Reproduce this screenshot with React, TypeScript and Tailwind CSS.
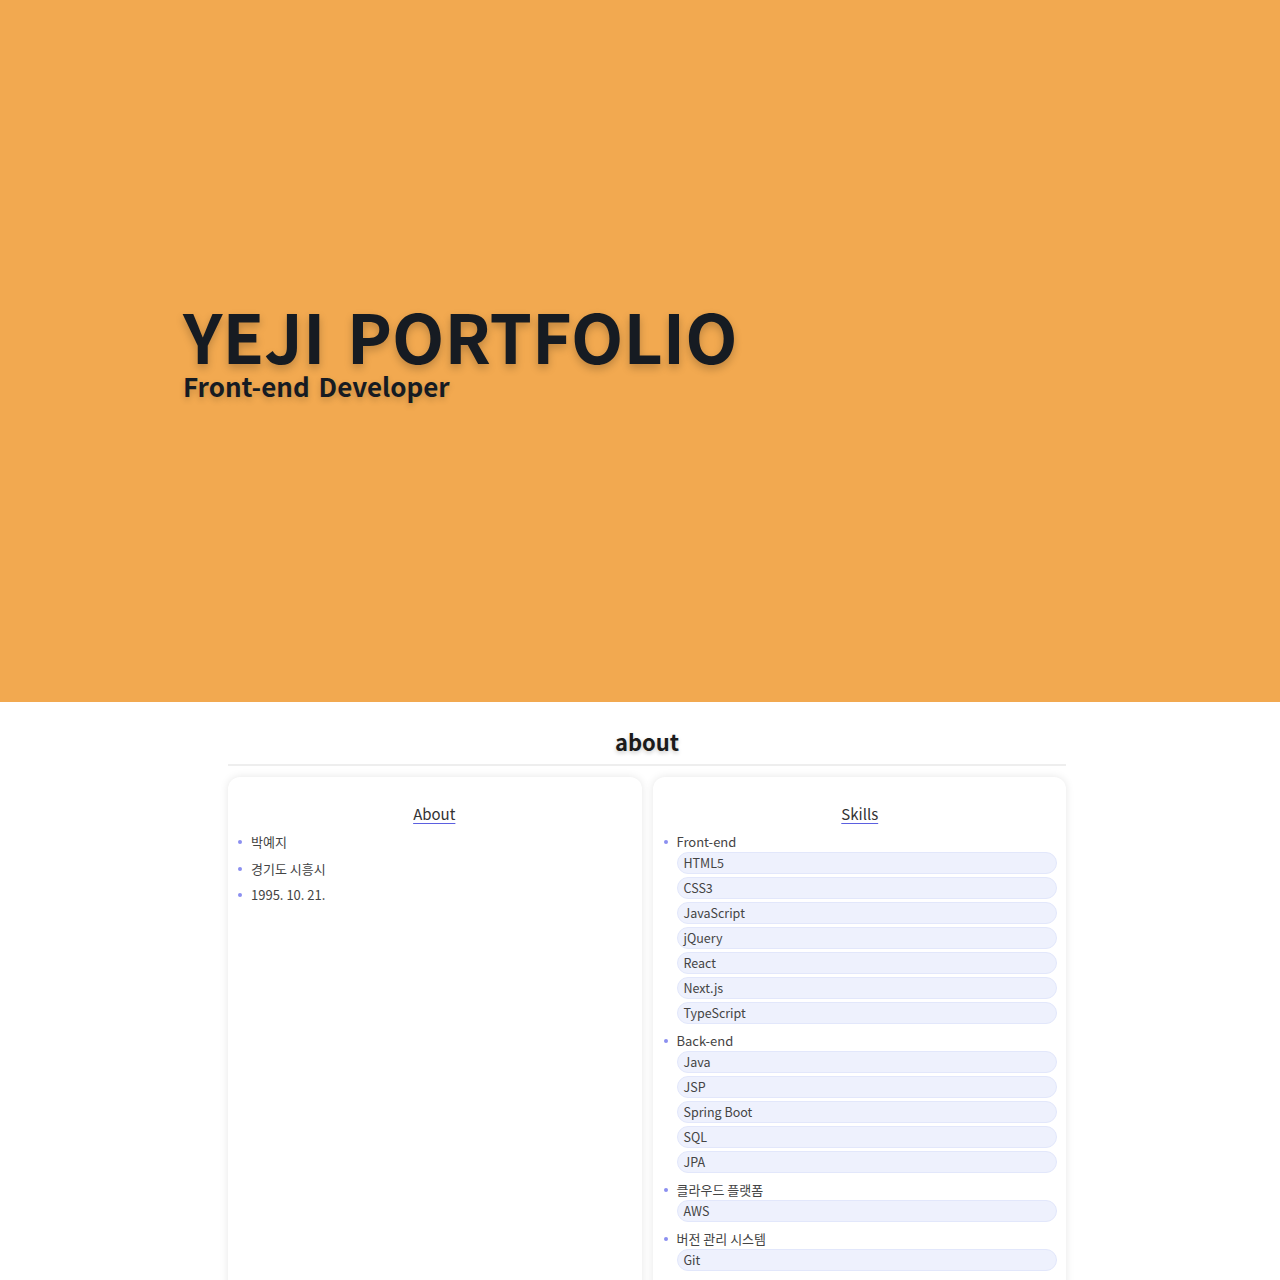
import React from "react";

const skills: { group: string; items: string[] }[] = [
  { group: "Front-end", items: ["HTML5", "CSS3", "JavaScript", "jQuery", "React", "Next.js", "TypeScript"] },
  { group: "Back-end", items: ["Java", "JSP", "Spring Boot", "SQL", "JPA"] },
  { group: "클라우드 플랫폼", items: ["AWS"] },
  { group: "버전 관리 시스템", items: ["Git"] },
];

const about = ["박예지", "경기도 시흥시", "1995. 10. 21."];

const Bullet = () => <span className="mt-[8px] mr-[9px] ml-[1px] h-[4px] w-[4px] shrink-0 rounded-full bg-[#8b8ff0]" />;

const CardTitle = ({ children }: { children: React.ReactNode }) => (
  <h3 className="mb-[8px] text-center text-[15px] leading-[20px] text-[#333]">
    <span className="underline decoration-[#5b5fe0] underline-offset-[3px]">{children}</span>
  </h3>
);

export default function App() {
  return (
    <div className="min-h-[1280px] bg-white font-['Noto_Sans_CJK_KR','Open_Sans',sans-serif] text-[#222]">
      {/* hero */}
      <section className="flex h-[702px] flex-col justify-center bg-[#f2a950] pl-[183px] pt-[4px]">
        <h1 className="text-[68px] font-bold leading-[60px] [word-spacing:6px] text-[#161b22] [text-shadow:0_4px_8px_rgba(0,0,0,0.22)]">
          YEJI PORTFOLIO
        </h1>
        <p className="mt-[6px] text-[26px] font-bold leading-[30px] [word-spacing:3px] text-[#161b22] [text-shadow:0_3px_6px_rgba(0,0,0,0.18)]">
          Front-end Developer
        </p>
      </section>

      {/* about */}
      <section className="mx-auto w-[852px] pl-[14px] pt-[24px]">
        <h2 className="text-center text-[22px] font-bold leading-[30px] text-[#1b1b1b] [text-shadow:0_2px_4px_rgba(0,0,0,0.2)]">
          about
        </h2>
        <div className="mt-[8px] h-[2px] bg-[#eeeeee]" />
        <div className="mt-[11px] grid grid-cols-2 gap-[11px]">
          <div className="min-h-[520px] rounded-[12px] bg-white pl-[9px] pr-[10px] pt-[27px] shadow-[0_0_8px_rgba(0,0,0,0.1)]">
            <CardTitle>About</CardTitle>
            <ul className="flex flex-col gap-[6px]">
              {about.map((a) => (
                <li key={a} className="flex text-[13px] leading-[20.5px] text-[#444]">
                  <Bullet />
                  {a}
                </li>
              ))}
            </ul>
          </div>
          <div className="min-h-[520px] rounded-[12px] bg-white pl-[10px] pr-[9px] pt-[27px] shadow-[0_0_8px_rgba(0,0,0,0.1)]">
            <CardTitle>Skills</CardTitle>
            <ul className="flex flex-col gap-[7px]">
              {skills.map((s) => (
                <li key={s.group} className="flex text-[13px] leading-[18px] text-[#444]">
                  <Bullet />
                  <div className="flex-1">
                    <div className="leading-[20px]">{s.group}</div>
                    <div className="flex flex-col gap-[3px]">
                      {s.items.map((it) => (
                        <div
                          key={it}
                          className="h-[22px] rounded-full border border-[#e2e7fb] bg-[#eef1fd] pl-[6px] text-[12.5px] leading-[20px] text-[#444]"
                        >
                          {it}
                        </div>
                      ))}
                    </div>
                  </div>
                </li>
              ))}
            </ul>
          </div>
        </div>
      </section>
    </div>
  );
}
